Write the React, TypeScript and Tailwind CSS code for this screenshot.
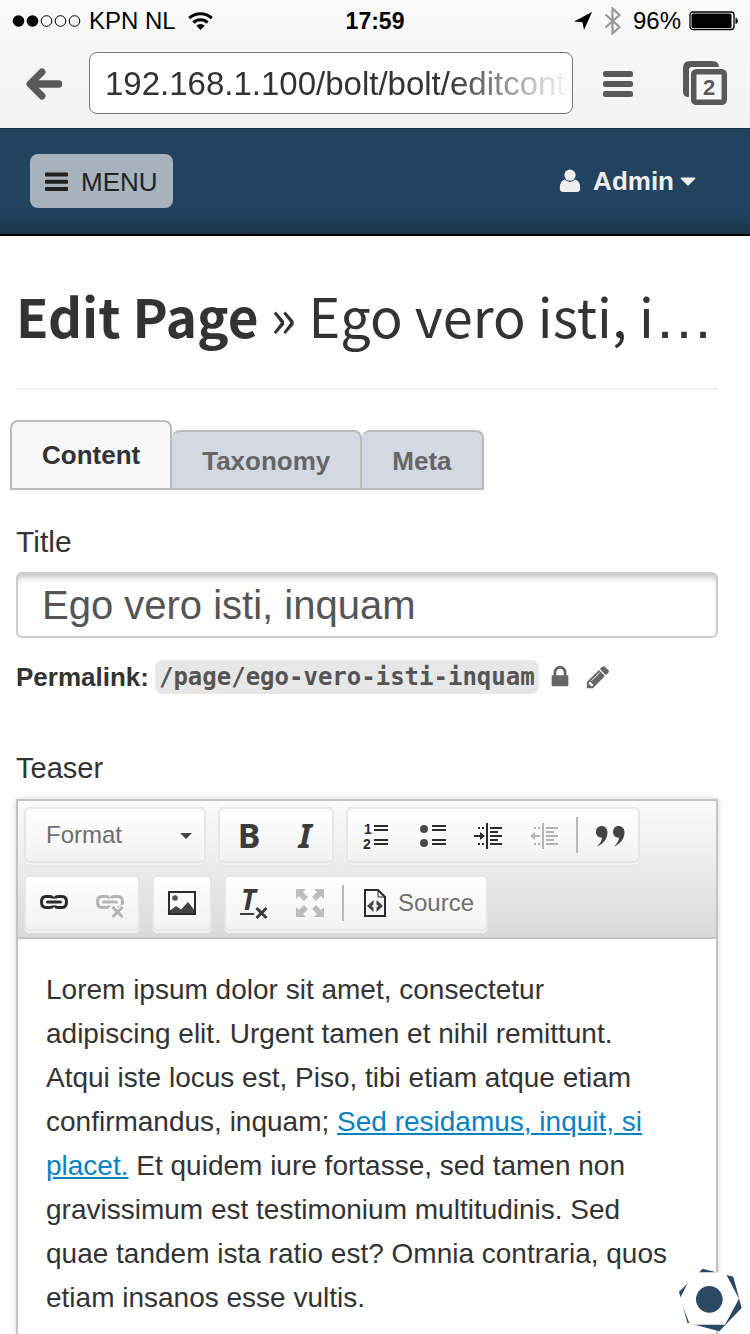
import React from "react";

const INK = "#2b2b2b";
const DIM = "#b4b4b4";

function StatusBar() {
  return (
    <div className="flex h-10 items-center justify-between px-3 pt-0.5 text-2xl leading-10 text-black">
      <div className="flex flex-1 items-center gap-2">
        <svg width="69" height="14" viewBox="0 0 69 14" aria-hidden="true">
          <circle cx="6.5" cy="7" r="5.8" />
          <circle cx="20.5" cy="7" r="5.8" />
          <g fill="none" stroke="#000">
            <circle cx="34.5" cy="7" r="5.300" />
            <circle cx="48.5" cy="7" r="5.300" />
            <circle cx="62.5" cy="7" r="5.300" />
          </g>
        </svg>
        <span>KPN NL</span>
        <svg width="32" height="20" viewBox="0 0 32 20" aria-hidden="true">
          <g fill="none" stroke="#000" strokeWidth="3">
            <path d="M5.2 7.2a16.4 16.4 0 0 1 22.6 0" />
            <path d="M9.4 11.6a10.4 10.4 0 0 1 14.2 0" />
          </g>
          <path d="M12.3 14.8a6 6 0 0 1 8.4 0L16.5 19z" />
        </svg>
      </div>
      <span className="text-[23px] font-bold">17:59</span>
      <div className="flex flex-1 items-center justify-end gap-2">
        <svg width="20" height="20" viewBox="0 0 20 20" aria-hidden="true">
          <path d="M19 1 1 10.500l8.500.7L11 19z" />
        </svg>
        <svg width="24" height="28" viewBox="0 0 24 28" aria-hidden="true">
          <path
            d="M4.500 7.500l14 12.500-7 6.500V1.500l7 6.500-14 12.500"
            fill="none"
            stroke="#999"
            strokeWidth="2.200"
          />
        </svg>
        <span>96%</span>
        <svg width="49" height="20" viewBox="0 0 49 20" aria-hidden="true">
          <rect x="1" y="1" width="44" height="17.500" rx="3" fill="#fff" stroke="#000" strokeWidth="1.300" />
          <rect x="2.500" y="2.500" width="40" height="14.500" rx="1.500" />
          <path d="M46.500 6.500c3 .8 3 5.700 0 6.500z" />
        </svg>
      </div>
    </div>
  );
}

function BrowserBar() {
  return (
    <div className="flex items-center pb-3.5 pl-6 pr-5 pt-3">
      <button type="button" aria-label="Back" className="w-10">
        <svg width="40" height="36" viewBox="0 0 40 36" fill="none" stroke="#595959" strokeLinecap="round" strokeLinejoin="round">
          <path d="M18 7 6 19l12 12" strokeWidth="7" />
          <path d="M7 19h27.500" strokeWidth="7.500" />
        </svg>
      </button>
      <div className="ml-[25px] h-[62px] min-w-0 flex-1 overflow-hidden rounded-lg border border-[#777] bg-white">
        <input
          type="text"
          aria-label="Address"
          defaultValue="192.168.1.100/bolt/bolt/editcontent"
          className="h-full w-full bg-transparent pl-[15px] pt-0.5 text-[33px] text-[#333] outline-none [mask-image:linear-gradient(to_right,#000_74%,transparent_100%)]"
        />
      </div>
      <button type="button" aria-label="Browser menu" className="ml-7">
        <svg width="34" height="32" viewBox="0 0 34 32" fill="#595959">
          <rect x="2" y="4" width="30" height="6" rx="2.500" />
          <rect x="2" y="14" width="30" height="6" rx="2.500" />
          <rect x="2" y="24" width="30" height="6" rx="2.500" />
        </svg>
      </button>
      <button type="button" aria-label="Tabs" className="ml-[47px] mr-px">
        <svg width="47" height="46" viewBox="0 0 47 46" fill="none">
          <path d="M1 35V8q0-7 7-7h22q7 0 7 6H10q-3 0-3 3v27q-6 0-6-5z" fill="#595959" />
          <rect x="11.700" y="11.700" width="30.600" height="30.600" rx="2.500" fill="#f7f7f7" stroke="#595959" strokeWidth="5.500" />
          <text x="27" y="35" textAnchor="middle" fill="#595959" fontSize="22" fontWeight="bold" fontFamily="Liberation Sans, sans-serif">
            2
          </text>
        </svg>
      </button>
    </div>
  );
}

function SiteHeader() {
  return (
    <header className="flex items-center justify-between border-b-2 border-t border-b-black border-t-[#132c40] bg-linear-to-b from-[#21435f] from-80% to-[#1b344b] px-[30px] pb-[26px] pt-[25px]">
      <button
        type="button"
        className="flex items-center gap-3 rounded-lg bg-[#a6b3bd] px-[15px] pb-[7px] pt-[9px] text-[26px] leading-[38px] text-[#222]"
      >
        <svg width="24" height="20" viewBox="0 0 24 20" fill="#222" aria-hidden="true">
          <rect x="0" y="0.500" width="23" height="4" rx="1" />
          <rect x="0" y="7.800" width="23" height="4" rx="1" />
          <rect x="0" y="15" width="23" height="4" rx="1" />
        </svg>
        MENU
      </button>
      <button type="button" className="mr-6 flex items-center text-[26px] font-bold leading-[38px] text-[#eee]">
        <svg width="22" height="24" viewBox="0 0 22 24" fill="#eee" aria-hidden="true">
          <circle cx="11" cy="6.200" r="5.600" />
          <path d="M5.800 10.500Q11 15.400 16.200 10.500q5 .9 5 9 0 3.500-3.700 3.500h-13Q.8 23 .8 19.500q0-8.100 5-9z" />
        </svg>
        <span className="ml-3">Admin</span>
        <svg className="ml-1.5" width="16" height="9" viewBox="0 0 16 9" fill="#eee" aria-hidden="true">
          <path d="M1 .5h14Q16 .8 15 2L9 8q-1 1-2 0L1 2Q0 .8 1 .5z" />
        </svg>
      </button>
    </header>
  );
}

function Tabs() {
  const idle =
    "h-[60px] rounded-t-lg border-2 border-l-0 border-[#bbb] bg-[#d2d9e0] px-[30px] pt-0.5 text-[#666]";
  return (
    <div role="tablist" className="-ml-1.5 flex items-end text-[26px] font-bold leading-8">
      <button
        type="button"
        role="tab"
        aria-selected="true"
        className="h-[70px] rounded-t-lg border-2 border-[#bbb] bg-[#f8f8f8] px-[30px] text-[#333]"
      >
        Content
      </button>
      <button type="button" role="tab" aria-selected="false" className={idle}>
        Taxonomy
      </button>
      <button type="button" role="tab" aria-selected="false" className={idle}>
        Meta
      </button>
    </div>
  );
}

function Group({ children }: { children: React.ReactNode }) {
  return (
    <div className="flex h-14 items-center rounded-md border-2 border-[#e6e6e6] bg-linear-to-b from-white to-[#f2f2f2] shadow-[0_2px_0_#f2f2f2]">
      {children}
    </div>
  );
}

function Tool({ label, children }: { label: string; children: React.ReactNode }) {
  return (
    <button type="button" aria-label={label} title={label} className="flex h-[52px] w-14 items-center justify-center">
      {children}
    </button>
  );
}

function Glyph({ color = INK, children }: { color?: string; children: React.ReactNode }) {
  return (
    <svg className="overflow-visible" width="32" height="32" viewBox="0 0 32 32" fill={color} color={color} aria-hidden="true">
      {children}
    </svg>
  );
}

function Divider() {
  return <span className="mx-1 h-9 w-0.5 bg-[#bbb]" />;
}

function ListLines({ x }: { x: number }) {
  return (
    <>
      {[6, 10, 20, 24].map((y) => (
        <rect key={y} x={x} y={y} width="14" height="2" />
      ))}
    </>
  );
}

function IndentShape() {
  return (
    <>
      <rect x="14" y="4" width="2" height="26" />
      {[8, 12, 16, 20, 24].map((y, i) => (
        <rect key={y} x="18" y={y} width={i % 2 ? 8 : 12} height="2" />
      ))}
      {[8, 24].map((y) => (
        <React.Fragment key={y}>
          <rect x="6" y={y} width="2" height="2" />
          <rect x="10" y={y} width="2" height="2" />
        </React.Fragment>
      ))}
    </>
  );
}

function ChainShape() {
  return (
    <>
      <g fill="none" stroke="currentColor" strokeWidth="3">
        <path d="M15 11.500V11q-1-1.500-3-1.500H8q-4.500 0-4.500 5.500t4.500 5.500h4q2 0 3-1.500v-.5" />
        <path d="M17 11.500V11q1-1.500 3-1.500h4q4.500 0 4.500 5.500t-4.500 5.500h-4q-2 0-3-1.500v-.5" />
      </g>
      <rect x="8" y="13.500" width="16" height="3" rx="1.500" />
    </>
  );
}

function Cross({ x, y }: { x: number; y: number }) {
  return (
    <path
      d={`M${x} ${y}l10 10m0-10l-10 10`}
      fill="none"
      stroke="currentColor"
      strokeWidth="3"
    />
  );
}

function Toolbar() {
  return (
    <div
      role="toolbar"
      aria-label="Text formatting"
      className="flex flex-wrap gap-3 border-b-2 border-[#c4c4c4] bg-linear-to-b from-[#fbfbfb] to-[#dadada] p-1.5"
    >
      <Group>
        <div className="relative w-[178px]">
          <select
            aria-label="Format"
            className="h-[52px] w-full appearance-none bg-transparent pl-5 text-2xl text-[#6e6e6e] outline-none"
          >
            <option>Format</option>
          </select>
          <svg className="pointer-events-none absolute right-3 top-6" width="12" height="6" viewBox="0 0 12 6" fill="#444">
            <path d="M0 0h12L6 6z" />
          </svg>
        </div>
      </Group>
      <Group>
        <Tool label="Bold">
          <span className="pl-0.5 font-['Noto_Sans',sans-serif] text-[34px] font-bold leading-8 text-[#3c3c3c]">B</span>
        </Tool>
        <Tool label="Italic">
          <span className="pl-0.5 font-['Noto_Sans',sans-serif] text-[34px] font-bold italic leading-8 text-[#3c3c3c]">I</span>
        </Tool>
      </Group>
      <Group>
        <Tool label="Numbered list">
          <Glyph>
            <g fontFamily="Liberation Sans, sans-serif" fontWeight="bold" fontSize="14">
              <text x="4" y="15">1</text>
              <text x="3" y="30">2</text>
            </g>
            <ListLines x={14} />
          </Glyph>
        </Tool>
        <Tool label="Bulleted list">
          <Glyph>
            <circle cx="8" cy="10" r="4" fill="#484848" />
            <circle cx="8" cy="24" r="4" fill="#484848" />
            <ListLines x={16} />
          </Glyph>
        </Tool>
        <Tool label="Increase indent">
          <Glyph>
            <IndentShape />
            <path d="M2 16h6v-3l5 4-5 4v-3H2z" />
          </Glyph>
        </Tool>
        <Tool label="Decrease indent">
          <Glyph color={DIM}>
            <IndentShape />
            <path d="M12 16H7v-3l-5 4 5 4v-3h5z" />
          </Glyph>
        </Tool>
        <Divider />
        <Tool label="Block quote">
          <Glyph color="#444">
            <path d="M7.500 7C11 7 13.500 9.600 13.500 13.500c0 6.500-4.500 11.500-10.500 14 3.500-3.500 5-6.500 5-8.800C4.500 18.900 2 16.500 2 13c0-3.400 2.400-6 5.500-6z" />
            <path d="M24.500 7c3.500 0 6 2.600 6 6.500 0 6.500-4.500 11.500-10.500 14 3.500-3.500 5-6.500 5-8.800-3.500.2-6-2.200-6-5.700 0-3.400 2.400-6 5.500-6z" />
          </Glyph>
        </Tool>
      </Group>
      <Group>
        <Tool label="Link">
          <Glyph>
            <ChainShape />
          </Glyph>
        </Tool>
        <Tool label="Unlink">
          <Glyph color={DIM}>
            <ChainShape />
            <path d="M16 17l4-.5 4 4 4-3 2 1v13H16z" fill="#f7f7f7" />
            <Cross x={18.5} y={20} />
          </Glyph>
        </Tool>
      </Group>
      <Group>
        <Tool label="Image">
          <Glyph>
            <rect x="3" y="5" width="26" height="22" fill="none" stroke={INK} strokeWidth="2" />
            <circle cx="9" cy="11" r="2.800" fill="#555" />
            <path d="M4 23.500l6-4.500 5 3.500 7-7.500 6 7.500V26H4z" fill="#444" />
          </Glyph>
        </Tool>
      </Group>
      <Group>
        <Tool label="Remove format">
          <Glyph color="#3a3a3a">
            <text x="3" y="23" fontFamily="Noto Sans, sans-serif" fontSize="28" fontWeight="bold" fontStyle="italic">
              T
            </text>
            <rect x="2" y="26" width="14" height="2" />
            <Cross x={18.5} y={21} />
          </Glyph>
        </Tool>
        <Tool label="Maximize">
          <Glyph color="#bcbcbc">
            <path d="M2 2h10L9 5l5 5-4 4-5-5-3 3z" />
            <path d="M30 2v10l-3-3-5 5-4-4 5-5-3-3z" />
            <path d="M2 30V20l3 3 5-5 4 4-5 5 3 3z" />
            <path d="M30 30H20l3-3-5-5 4-4 5 5 3-3z" />
          </Glyph>
        </Tool>
        <Divider />
        <button type="button" className="flex h-[52px] items-center gap-1.5 px-3 text-2xl text-[#6e6e6e]">
          <Glyph>
            <path d="M5 3h13l7 7v19H5z" fill="none" stroke={INK} strokeWidth="2" />
            <path d="M18 3v7h7" fill="none" stroke={INK} strokeWidth="1" />
            <path d="M13.500 13v4.500L11.500 19l2 1.500V25L7 19zM16.500 13v4.500l2 1.500-2 1.500V25L23 19z" fill="#444" />
          </Glyph>
          Source
        </button>
      </Group>
    </div>
  );
}

function Permalink() {
  return (
    <div className="mt-[22px] flex items-center text-[26px] font-bold leading-[34px] text-[#333]">
      Permalink:
      <code className="ml-1.5 rounded-lg bg-[#e7e7e7] px-1 font-['DejaVu_Sans_Mono',monospace] text-2xl leading-[34px] text-[#555]">
        /page/ego-vero-isti-inquam
      </code>
      <button type="button" aria-label="Unlock permalink" className="ml-2">
        <svg width="26" height="26" viewBox="0 0 1792 1792" fill="#666">
          <path d="M640 768h512v-192q0-106-75-181t-181-75-181 75-75 181v192zm832 96v576q0 40-28 68t-68 28h-960q-40 0-68-28t-28-68v-576q0-40 28-68t68-28h32v-192q0-184 132-316t316-132 316 132 132 316v192h32q40 0 68 28t28 68z" />
        </svg>
      </button>
      <button type="button" aria-label="Edit permalink" className="ml-3">
        <svg width="26" height="26" viewBox="0 0 1792 1792" fill="#666">
          <path d="M491 1536l91-91-235-235-91 91v107h128v128h107zm523-928q0-22-22-22-10 0-17 7l-542 542q-7 7-7 17 0 22 22 22 10 0 17-7l542-542q7-7 7-17zm-54-192l416 416-832 832h-416v-416zm683 96q0 53-37 90l-166 166-416-416 166-165q36-38 90-38 53 0 91 38l235 234q37 39 37 91z" />
        </svg>
      </button>
    </div>
  );
}

function NutBadge() {
  return (
    <button type="button" aria-label="Bolt" className="fixed bottom-px right-[7px]">
      <svg width="65" height="65" viewBox="0 0 195 195">
        <path d="M74 2l92 24 25 94-67 70-96-26L3 71z" fill="#2b4963" />
        <path d="M5 92l41-79h95l42 79-42 78H36z" fill="#fff" />
        <circle cx="94" cy="94" r="40" fill="#2b4963" />
      </svg>
    </button>
  );
}

export default function App() {
  return (
    <div className="flex min-h-screen flex-col bg-white font-['Liberation_Sans',Arial,sans-serif]">
      <div className="bg-linear-to-b from-[#fafafa] to-[#f2f2f2]">
        <StatusBar />
        <BrowserBar />
      </div>
      <SiteHeader />
      <main className="flex flex-1 flex-col pl-4 pr-8">
        <h1 className="mt-[39px] overflow-hidden whitespace-nowrap border-b-2 border-[#eee] pb-[33px] font-['Noto_Sans_CJK_SC',sans-serif] text-[54px] leading-20 text-[#333]">
          <strong className="text-[53px] font-bold">Edit Page</strong> » Ego vero isti, i
          <span className="font-['Liberation_Sans',sans-serif] text-[60px] leading-none">…</span>
        </h1>
        <div className="mt-[30px]">
          <Tabs />
        </div>
        <label htmlFor="title" className="mt-8 text-[30px] leading-10 text-[#333]">
          Title
        </label>
        <input
          id="title"
          type="text"
          defaultValue="Ego vero isti, inquam"
          className="mt-2.5 h-[66px] w-full rounded-md border-2 border-[#ccc] px-6 text-[40px] text-[#555] shadow-[inset_0_6px_6px_-3px_rgba(0,0,0,0.25)] outline-none"
        />
        <Permalink />
        <span id="teaser-label" className="mt-[54px] text-[29px] leading-10 text-[#333]">
          Teaser
        </span>
        <section className="mt-[11px] flex flex-1 flex-col border-2 border-b-0 border-[#c4c4c4] shadow-[0_0_6px_rgba(0,0,0,0.18)]">
          <Toolbar />
          <div role="textbox" aria-multiline="true" aria-labelledby="teaser-label" className="flex-1 bg-white pl-7 pr-[42px] pt-[29px]">
            <p className="text-[28px] leading-[44px] text-[#333]">
              Lorem ipsum dolor sit amet, consectetur adipiscing elit. Urgent tamen et nihil remittunt. Atqui iste
              locus est, Piso, tibi etiam atque etiam confirmandus, inquam;{" "}
              <a href="#" className="text-[#0782c1] underline">
                Sed residamus, inquit, si placet.
              </a>{" "}
              Et quidem iure fortasse, sed tamen non gravissimum est testimonium multitudinis. Sed quae tandem ista
              ratio est? Omnia contraria, quos etiam insanos esse vultis.
            </p>
          </div>
        </section>
      </main>
      <NutBadge />
    </div>
  );
}
